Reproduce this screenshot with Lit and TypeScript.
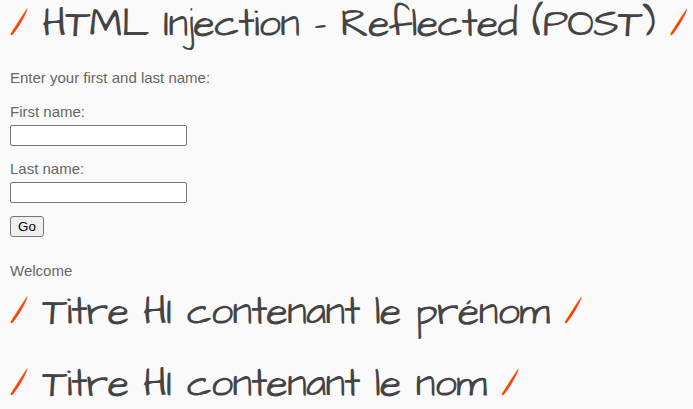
import { LitElement, html, css } from "lit";
import { customElement } from "lit/decorators.js";

@customElement("app-root")
class AppRoot extends LitElement {
  static styles = css`
    :host {
      display: block; box-sizing: border-box; width: 693px; height: 409px; overflow: hidden;
      padding-left: 10px; background: #fafafa; color: #666;
      font: 15px/18px "Liberation Sans", Arial, sans-serif;
    }
    h1 {
      margin: 0; height: 50px; white-space: nowrap; color: #444;
      font: 400 40px/50px "Architects Daughter", sans-serif; letter-spacing: -1px;
    }
    .slash { color: #ff4000; }
    .body { display: flex; flex-direction: column; align-items: flex-start; }
    .intro { margin: 19px 0 16px; }
    .field { display: flex; flex-direction: column; margin-bottom: 13px; }
    .field + .field { margin-top: 1px; }
    label { margin-bottom: 4px; }
    input {
      box-sizing: border-box; width: 177px; height: 21px; margin: 0; padding: 1px 2px;
      border: 1px solid #767676; border-radius: 2px; background: #fff;
    }
    button {
      box-sizing: border-box; width: 34px; height: 21px; margin: 0; padding: 0;
      border: 1px solid #767676; border-radius: 3px; background: #efefef; color: #000;
      font: 13.333px/19px "Liberation Sans", Arial, sans-serif;
    }
    .welcome { margin: 25px 0 8px; }
    .second { margin-top: 22px; }
  `;

  heading(text: string, extra = "") {
    return html`<h1 class=${extra}><span class="slash">/</span> ${text} <span class="slash">/</span></h1>`;
  }

  render() {
    return html`
      ${this.heading("HTML Injection - Reflected (POST)")}
      <div class="body">
        <div class="intro">Enter your first and last name:</div>
        <div class="field"><label for="first">First name:</label><input id="first" type="text" /></div>
        <div class="field"><label for="last">Last name:</label><input id="last" type="text" /></div>
        <button>Go</button>
        <div class="welcome">Welcome</div>
      </div>
      ${this.heading("Titre HI contenant le prénom")}
      ${this.heading("Titre HI contenant le nom", "second")}
    `;
  }
}
